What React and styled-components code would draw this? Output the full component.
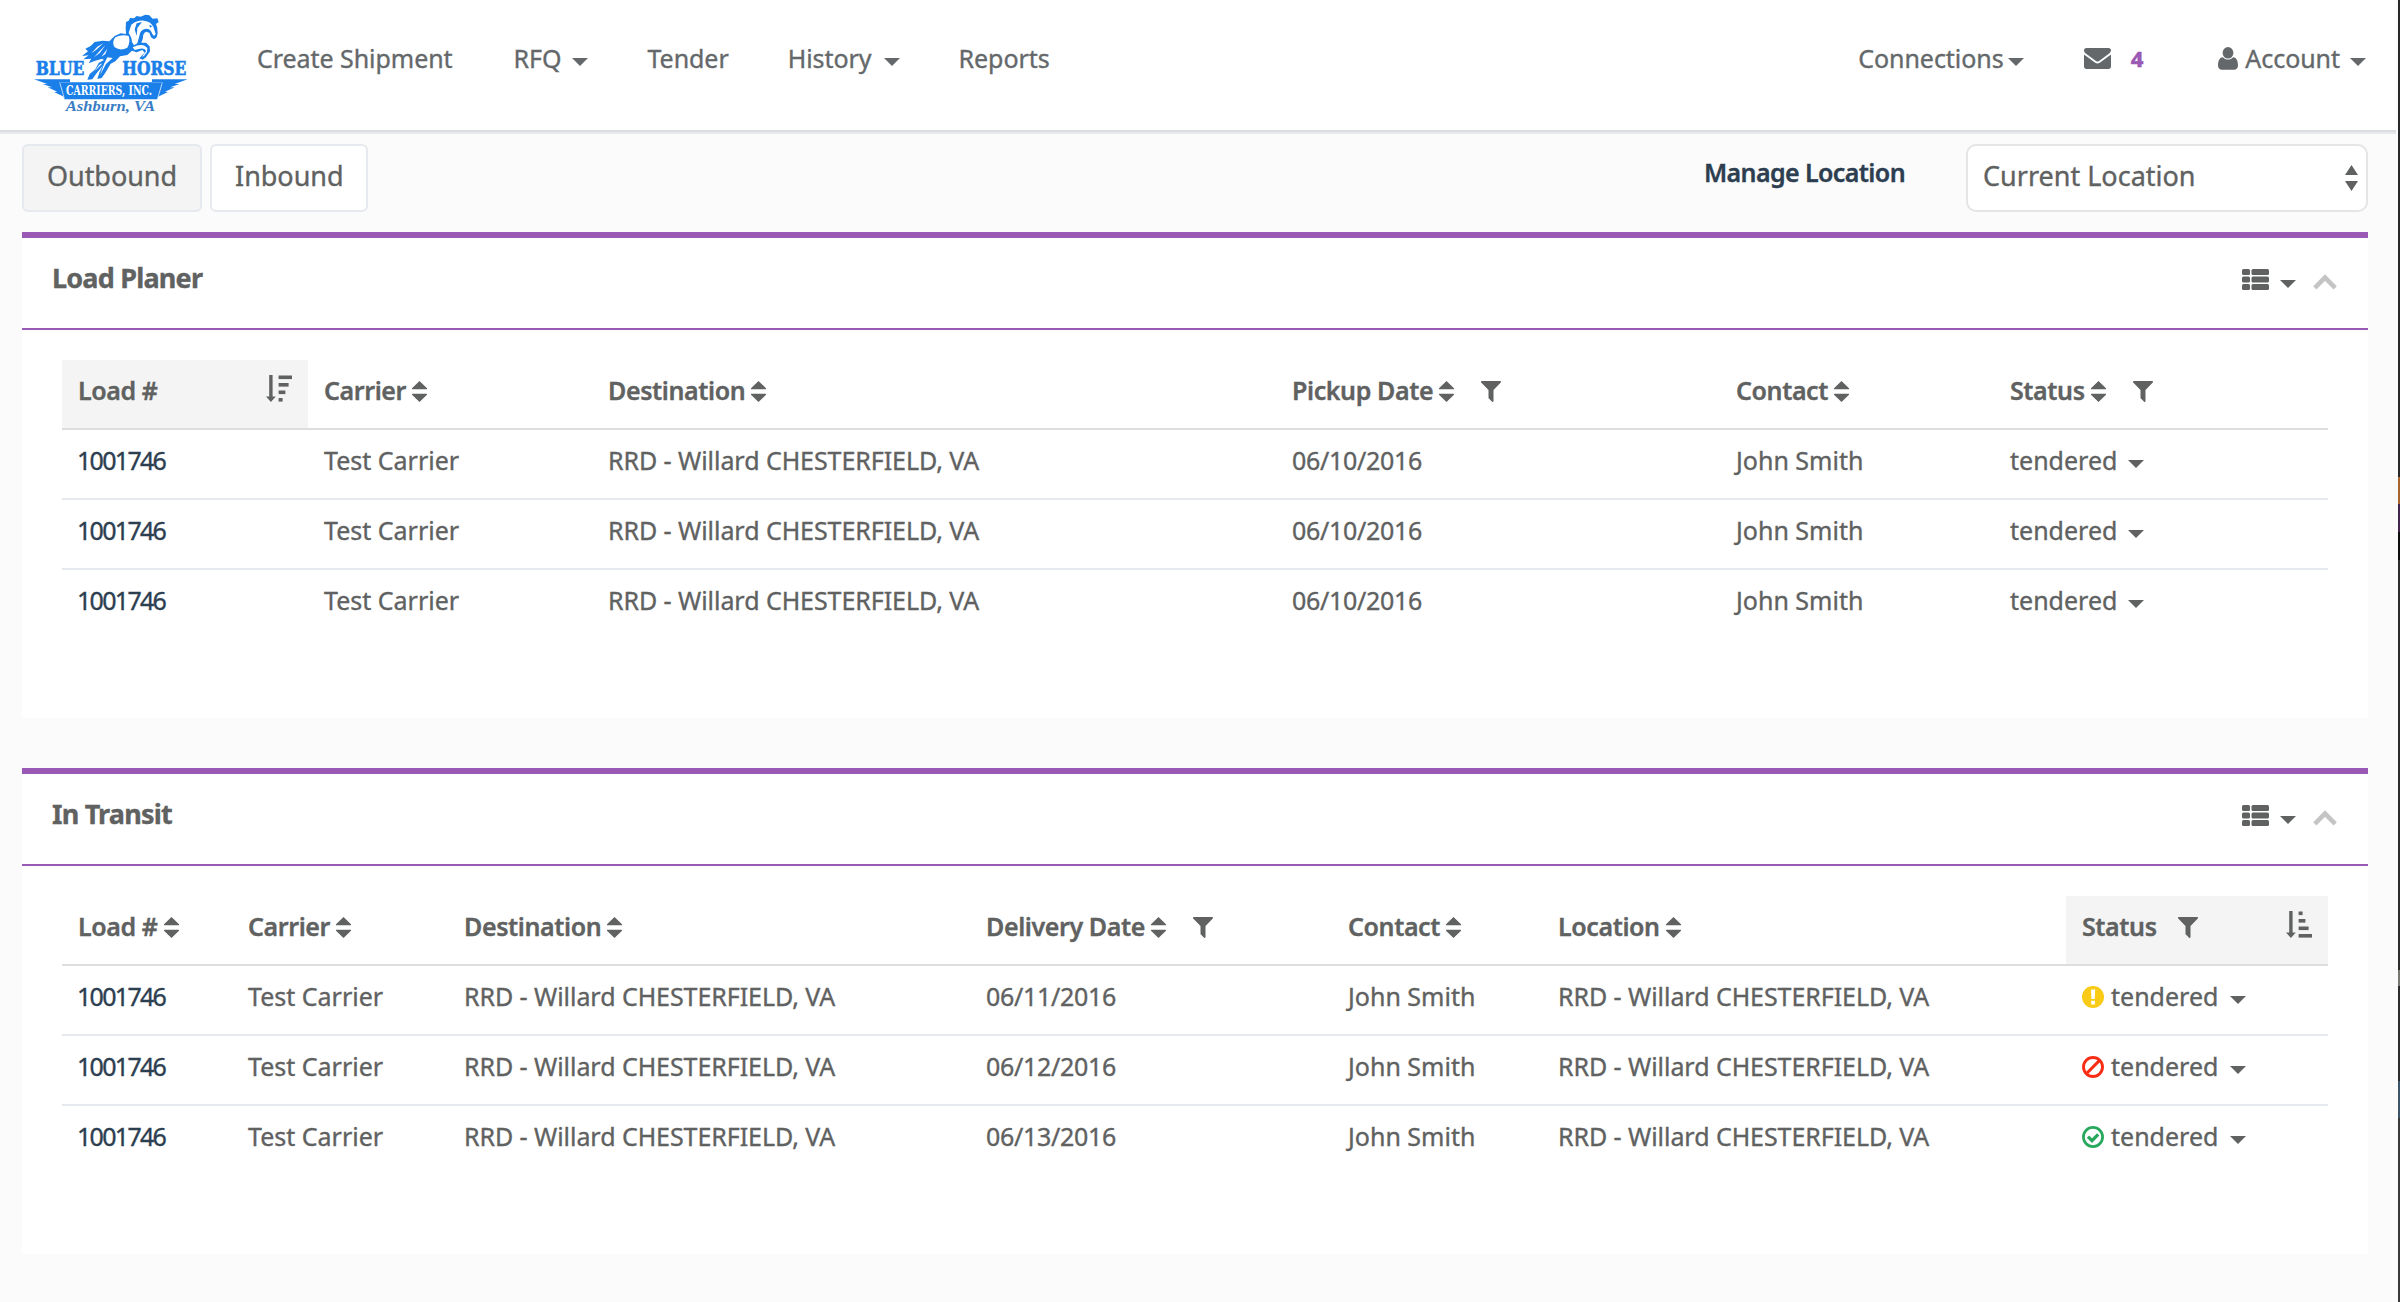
import React from 'react';
import styled, { createGlobalStyle, css } from 'styled-components';

const color = {
  page: '#fbfbfb',
  surface: '#ffffff',
  active: '#f4f4f4',
  nav: '#64686a',
  text: '#606161',
  link: '#2c3e50',
  accent: '#9b59b6',
  rule: '#dddddd',
  line: '#e6e9ed',
  muted: '#c4c4c4',
  warning: '#f9ca16',
  danger: '#f92c14',
  success: '#27a85c',
};

const GlobalStyle = createGlobalStyle`
  *, *::before, *::after { box-sizing: border-box; }
  body {
    margin: 0;
    background: ${color.page};
    color: ${color.text};
    font: 400 25px/36px "Noto Sans", "Open Sans", sans-serif;
    -webkit-text-stroke: 0.35px currentColor;
    overflow: hidden;
  }
  svg { display: block; flex: none; }
`;

const Window = styled.div`
  display: flex;
  height: 1302px;
`;

const Page = styled.div`
  flex: 1;
  min-width: 0;
  background: ${color.page};
`;

const WindowEdge = styled.div`
  width: 2px;
  background: linear-gradient(
    #26282a 0 477px,
    #a8642c 477px 504px,
    #43244c 504px 532px,
    #0c0c0c 532px 560px,
    #2b2b2b 560px 970px,
    #77776f 970px 986px,
    #2b2b2b 986px 1081px,
    #3c5468 1081px 1118px,
    #3a3a39 1118px 1300px
  );
`;

/* ---------- top navigation ---------- */

const Header = styled.header`
  display: flex;
  align-items: flex-start;
  height: 132px;
  margin-right: 2px;
  padding: 14px 30px 0 34px;
  background: ${color.surface};
  border-bottom: 2px solid ${color.rule};
  box-shadow: 0 2px 0 ${color.line};
  color: ${color.nav};
`;

const LogoMark = styled.svg`
  width: 154px;
  height: 100px;
  overflow: visible;
  fill: #1a7fe8;
  -webkit-text-stroke: 0;
`;

const MainNav = styled.nav`
  display: flex;
  gap: 59px;
  margin-left: 69px;
  padding-top: 26px;
  letter-spacing: -0.05px;
`;

const UserNav = styled(MainNav)`
  margin-left: auto;
  gap: 0;
`;

const NavItem = styled.a`
  display: flex;
  align-items: center;
  height: 36px;
  gap: ${(p) => p.$gap ?? 12}px;
  margin-right: ${(p) => p.$after ?? 0}px;
  white-space: nowrap;
`;

const Count = styled.span`
  color: ${color.accent};
  font-size: 22px;
  font-weight: 800;
`;

/* ---------- toolbar ---------- */

const Toolbar = styled.div`
  display: flex;
  align-items: flex-start;
  padding: 12px 30px 20px 22px;
  font-size: 27px;
`;

const control = css`
  display: flex;
  align-items: center;
  height: 68px;
  background: ${color.surface};
  border: 2px solid ${color.line};
  border-radius: 6px;
`;

const Tab = styled.button`
  ${control}
  margin-right: 8px;
  padding: 0 23px 5px;
  background: ${(p) => (p.$active ? color.active : color.surface)};
  color: inherit;
  font: inherit;
  letter-spacing: -0.05px;
`;

const ManageLink = styled.a`
  margin: 10px 61px 0 auto;
  color: ${color.link};
  font-size: 25px;
  font-weight: 600;
  letter-spacing: -0.6px;
`;

const Select = styled.div`
  ${control}
  justify-content: space-between;
  width: 402px;
  padding: 0 8px 0 15px;
  border-color: #e5e5e5;
  border-radius: 10px;
`;

const SelectValue = styled.span`
  padding-bottom: 5px;
`;

/* ---------- panels ---------- */

const Panel = styled.section`
  height: 486px;
  margin: 0 30px 50px 22px;
  background: ${color.surface};
  border-top: 6px solid ${color.accent};
`;

const PanelHeader = styled.div`
  display: flex;
  align-items: flex-start;
  justify-content: space-between;
  height: 92px;
  padding: 22px 31px 0 30px;
  border-bottom: 2px solid ${color.accent};
`;

const PanelTitle = styled.h2`
  margin: 0;
  font-size: 27px;
  font-weight: 700;
  letter-spacing: -0.8px;
`;

const PanelTools = styled.div`
  display: flex;
  align-items: center;
  height: 40px;
`;

const ToolButton = styled.span`
  margin: ${(p) => p.$margin};
`;

const Table = styled.table`
  width: 2266px;
  margin: 30px 0 0 40px;
  table-layout: fixed;
  border-collapse: separate;
  border-spacing: 0;
`;

const Column = styled.col`
  width: ${(p) => p.$width}px;
`;

const HeadCell = styled.th`
  height: 70px;
  padding: 12px 16px 0;
  vertical-align: top;
  text-align: left;
  font-weight: 600;
  letter-spacing: -0.4px;
  background: ${(p) => (p.$sorted ? color.active : 'transparent')};
  border-bottom: 2px solid ${color.rule};
`;

const Cell = styled.td`
  height: 70px;
  padding: 12px 16px 0;
  vertical-align: top;
  white-space: nowrap;
  border-bottom: 2px solid ${color.line};
  tr:last-child > & { border-bottom-color: transparent; }
`;

const CellContent = styled.div`
  display: flex;
  align-items: center;
  height: 36px;
`;

const LoadLink = styled.a`
  margin-left: -1px;
  color: ${color.link};
  letter-spacing: -1.7px;
`;

const SiteText = styled.span`
  letter-spacing: -0.06px;
`;

const DateText = styled.span`
  letter-spacing: -0.3px;
`;

const SortHandle = styled.span`
  margin: 2px 0 0 6px;
`;

const FilterHandle = styled.span`
  margin: 3px 0 0 ${(p) => (p.$tight ? 21 : 27)}px;
`;

const SortDirection = styled.span`
  margin: -3px 0 0 auto;
`;

const StatusMark = styled.span`
  margin: 2px 7px 0 0;
`;

const StatusCaret = styled.span`
  margin: 8px 0 0 ${(p) => (p.$marked ? 12 : 11)}px;
`;

const CaretBox = styled.span`
  margin-left: ${(p) => p.$shift ?? 0}px;
  padding-top: 8px;
`;

/* ---------- icons ---------- */

const Caret = () => (
  <svg width="16" height="8" viewBox="0 0 16 8" fill="currentColor">
    <path d="M0 0h16L8 8z" />
  </svg>
);

const SortIcon = () => (
  <svg width="15" height="21" viewBox="0 0 15 21" fill="currentColor">
    <path d="M7.5 0 15 7.2a.6.6 0 0 1-.4 1H.4a.6.6 0 0 1-.4-1zM7.5 21 0 13.8a.6.6 0 0 1 .4-1h14.2a.6.6 0 0 1 .4 1z" />
  </svg>
);

const SelectArrows = () => (
  <svg width="13" height="26" viewBox="0 0 13 26" fill="currentColor">
    <path d="M6.5 0 13 10H0zM6.5 26 0 16h13z" />
  </svg>
);

const FilterIcon = () => (
  <svg width="20" height="21" viewBox="0 0 20 21" fill="currentColor">
    <path d="M.8 0h18.4c.8 0 1.1.8.6 1.4L12.5 9v11c0 .9-.8 1.2-1.4.7l-3.2-3.2c-.3-.3-.4-.5-.4-.8V9L.2 1.4C-.3.8 0 0 .8 0z" />
  </svg>
);

const SortAmountIcon = ({ widths }) => (
  <svg width="26" height="27" viewBox="0 0 26 27" fill="currentColor">
    <path d="M3.2 0h3.4v21.5h3.2L4.9 27 0 21.5h3.2z" />
    {widths.map((w, i) => (
      <rect key={i} x="12.6" y={0.5 + i * 7.5} width={w} height="3.6" />
    ))}
  </svg>
);

const EnvelopeIcon = () => (
  <svg width="27" height="21" viewBox="0 0 27 21" fill="currentColor">
    <path d="M2.4 0h22.2C26 0 27 1 27 2.1c0 1.7-1.2 3-2.5 3.9l-8.4 6.2c-.8.6-1.6 1.3-2.6 1.3s-1.8-.7-2.6-1.3L2.5 6C1.2 5.1 0 3.8 0 2.4 0 1 .9 0 2.4 0z" />
    <path d="M0 6.4c.5.5 1 1 1.7 1.4l7.5 5.5c1.3 1 2.7 2.2 4.3 2.2s3-1.2 4.3-2.2l7.5-5.5c.7-.4 1.2-.9 1.7-1.4v12.2c0 1.4-1.1 2.4-2.4 2.4H2.4C1.1 21 0 20 0 18.6z" />
  </svg>
);

const UserIcon = () => (
  <svg width="20" height="23" viewBox="0 0 20 23" fill="currentColor">
    <ellipse cx="10" cy="5.8" rx="5.4" ry="5.8" />
    <path d="M4.9 10.2C6.2 11.7 8 12.6 10 12.6s3.8-.9 5.1-2.4C18.9 10.4 20 14.5 20 18.6c0 2.7-1.6 4.2-4 4.2H4c-2.4 0-4-1.5-4-4.2 0-4.1 1.1-8.2 4.9-8.4z" />
  </svg>
);

const ListIcon = () => (
  <svg width="27" height="21" viewBox="0 0 27 21" fill="currentColor">
    {[0, 7.5, 15].map((y) => (
      <React.Fragment key={y}>
        <rect y={y} width="8" height="6" rx="1.5" />
        <rect x="9.5" y={y} width="17.5" height="6" rx="1.5" />
      </React.Fragment>
    ))}
  </svg>
);

const ChevronUp = () => (
  <svg width="24" height="16" viewBox="0 0 24 16" fill="none" stroke={color.muted} strokeWidth="4.6">
    <path d="M1.8 13.8 12 3.6l10.2 10.2" />
  </svg>
);

const WarningIcon = () => (
  <svg width="22" height="22" viewBox="0 0 22 22">
    <circle cx="11" cy="11" r="11" fill={color.warning} />
    <path d="M9 3.5h4.2l-.4 9.5H9.4zM9.2 14.8h3.7v3.6H9.2z" fill="#fff" />
  </svg>
);

const BanIcon = () => (
  <svg width="22" height="22" viewBox="0 0 22 22" fill="none" stroke={color.danger} strokeWidth="2.9">
    <circle cx="11" cy="11" r="9.5" />
    <path d="M17.6 4.4 4.4 17.6" />
  </svg>
);

const CheckIcon = () => (
  <svg width="22" height="22" viewBox="0 0 22 22" fill="none" stroke={color.success}>
    <circle cx="11" cy="11" r="9.6" strokeWidth="2.7" />
    <path d="m6 10.6 4 4 6.2-6.2" strokeWidth="3.3" />
  </svg>
);

const Logo = () => (
  <LogoMark viewBox="42 42 462 300">
    <path d="M317 84L318 66 326 62 330 54 342 55 350 48 362 50 376 44 388 46 398 56 412 55 416 66 408 72Q414 84 413 100L410 112 402 118 393 112 388 98 378 95Q368 100 369 114L364 128 378 128 389 139 390 154 378 172 368 179 358 175 374 158 367 150 350 157 336 152 322 165 300 169 286 184 272 191 256 218 245 234 232 237 238 218 249 196 228 222 217 238 202 239 209 222 226 208 236 189 252 180 246 176 226 182 206 190 214 176 190 178 206 166 186 168 204 154 196 146 212 138 224 126 248 122 268 124 284 108 302 100 318 102z" />
    <g fill="#fff">
      <path d="M286 112Q306 102 326 108 332 126 322 143 302 154 284 142 274 128 286 112z" />
      <path d="M334 74Q352 60 372 62 392 64 400 80L407 102 402 108 397 102Q392 86 378 86 360 88 358 108L352 130 342 136Q334 128 334 114L326 98z" />
      <path d="M338 142Q358 132 374 137L382 144 381 156 372 168 366 170 378 154Q376 144 360 146L344 150z" />
      <path d="M262 172L278 174 258 192 242 222 240 226 252 192zM248 190L224 214 216 228 228 208 238 194zM250 130L228 150 214 160 232 140zM256 136L240 158 222 172 244 148zM262 146L256 162 244 170z" />
    </g>
    <path d="M388 74l9 5-7 4zM350 70l16-4-14 18-2 24-6-20zM294 160l18-8 8 4-18 9z" />
    <g fontFamily='"DejaVu Serif", serif' fontWeight="700">
      <text x="47" y="225" fontSize="58" textLength="146" lengthAdjust="spacingAndGlyphs" stroke="#1a7fe8" strokeWidth="2">BLUE</text>
      <text x="307" y="225" fontSize="58" textLength="192" lengthAdjust="spacingAndGlyphs" stroke="#1a7fe8" strokeWidth="2">HORSE</text>
      <path d="M118 247h310l-16 51H133z" />
      <path d="M42 238h108v8h-32l14 44-30-14 10-1-29-13h13l-28-10h14zM503 238H396v8h32l-14 44 30-14-9-1 29-13h-13l28-10h-15z" />
      <path d="M120 250l13 46M426 250l-13 46" stroke="#fff" strokeWidth="2" />
      <text x="138" y="286" fontSize="40" fill="#fff" textLength="258" lengthAdjust="spacingAndGlyphs">CARRIERS, INC.</text>
    </g>
    <text x="137" y="334" fontSize="44" fontFamily='"Liberation Serif", serif' fontStyle="italic" fontWeight="700" fill="#3a7dc4" textLength="268" lengthAdjust="spacingAndGlyphs">Ashburn, VA</text>
  </LogoMark>
);

/* ---------- data ---------- */

const site = <SiteText>RRD - Willard CHESTERFIELD, VA</SiteText>;

const loadPlanner = {
  title: 'Load Planer',
  columns: [
    { key: 'load', label: 'Load #', width: 246, sorted: 'desc' },
    { key: 'carrier', label: 'Carrier', width: 284 },
    { key: 'destination', label: 'Destination', width: 684 },
    { key: 'date', label: 'Pickup Date', width: 444, filter: true },
    { key: 'contact', label: 'Contact', width: 274 },
    { key: 'status', label: 'Status', width: 334, filter: true },
  ],
  rows: [1, 2, 3].map((id) => ({ id, date: '06/10/2016' })),
};

const inTransit = {
  title: 'In Transit',
  columns: [
    { key: 'load', label: 'Load #', width: 170 },
    { key: 'carrier', label: 'Carrier', width: 216 },
    { key: 'destination', label: 'Destination', width: 522 },
    { key: 'date', label: 'Delivery Date', width: 362, filter: true },
    { key: 'contact', label: 'Contact', width: 210 },
    { key: 'location', label: 'Location', width: 524 },
    { key: 'status', label: 'Status', width: 262, filter: true, sorted: 'asc' },
  ],
  rows: [
    { id: 1, date: '06/11/2016', mark: <WarningIcon /> },
    { id: 2, date: '06/12/2016', mark: <BanIcon /> },
    { id: 3, date: '06/13/2016', mark: <CheckIcon /> },
  ],
};

const bars = { desc: [13.4, 10, 6.8, 4], asc: [4, 6.8, 10, 13.4] };

const cellValue = {
  load: () => <LoadLink>1001746</LoadLink>,
  carrier: () => 'Test Carrier',
  destination: () => site,
  location: () => site,
  date: (row) => <DateText>{row.date}</DateText>,
  contact: () => 'John Smith',
  status: (row) => (
    <>
      {row.mark && <StatusMark>{row.mark}</StatusMark>}
      tendered
      <StatusCaret $marked={!!row.mark}><Caret /></StatusCaret>
    </>
  ),
};

function LoadPanel({ title, columns, rows }) {
  return (
    <Panel>
      <PanelHeader>
        <PanelTitle>{title}</PanelTitle>
        <PanelTools>
          <ToolButton $margin="0 11px 1px 0"><ListIcon /></ToolButton>
          <ToolButton $margin="8px 17px 0 0"><Caret /></ToolButton>
          <ToolButton $margin="4px 0 0"><ChevronUp /></ToolButton>
        </PanelTools>
      </PanelHeader>
      <Table>
        <colgroup>
          {columns.map((c) => <Column key={c.key} $width={c.width} />)}
        </colgroup>
        <thead>
          <tr>
            {columns.map((c) => (
              <HeadCell key={c.key} $sorted={!!c.sorted}>
                <CellContent>
                  {c.label}
                  {!c.sorted && <SortHandle><SortIcon /></SortHandle>}
                  {c.filter && <FilterHandle $tight={!!c.sorted}><FilterIcon /></FilterHandle>}
                  {c.sorted && <SortDirection><SortAmountIcon widths={bars[c.sorted]} /></SortDirection>}
                </CellContent>
              </HeadCell>
            ))}
          </tr>
        </thead>
        <tbody>
          {rows.map((row) => (
            <tr key={row.id}>
              {columns.map((c) => (
                <Cell key={c.key}>
                  <CellContent>{cellValue[c.key](row)}</CellContent>
                </Cell>
              ))}
            </tr>
          ))}
        </tbody>
      </Table>
    </Panel>
  );
}

export default function App() {
  return (
    <>
      <GlobalStyle />
      <Window>
        <Page>
          <Header>
            <Logo />
            <MainNav>
              <NavItem $after={2}>Create Shipment</NavItem>
              <NavItem $gap={11}>RFQ<CaretBox><Caret /></CaretBox></NavItem>
              <NavItem>Tender</NavItem>
              <NavItem>History<CaretBox><Caret /></CaretBox></NavItem>
              <NavItem>Reports</NavItem>
            </MainNav>
            <UserNav>
              <NavItem $gap={4} $after={60}>Connections<CaretBox><Caret /></CaretBox></NavItem>
              <NavItem $gap={20} $after={75}><EnvelopeIcon /><Count>4</Count></NavItem>
              <NavItem $gap={7}><UserIcon />Account<CaretBox $shift={3}><Caret /></CaretBox></NavItem>
            </UserNav>
          </Header>
          <Toolbar>
            <Tab $active>Outbound</Tab>
            <Tab>Inbound</Tab>
            <ManageLink>Manage Location</ManageLink>
            <Select>
              <SelectValue>Current Location</SelectValue>
              <SelectArrows />
            </Select>
          </Toolbar>
          <LoadPanel {...loadPlanner} />
          <LoadPanel {...inTransit} />
        </Page>
        <WindowEdge />
      </Window>
    </>
  );
}
